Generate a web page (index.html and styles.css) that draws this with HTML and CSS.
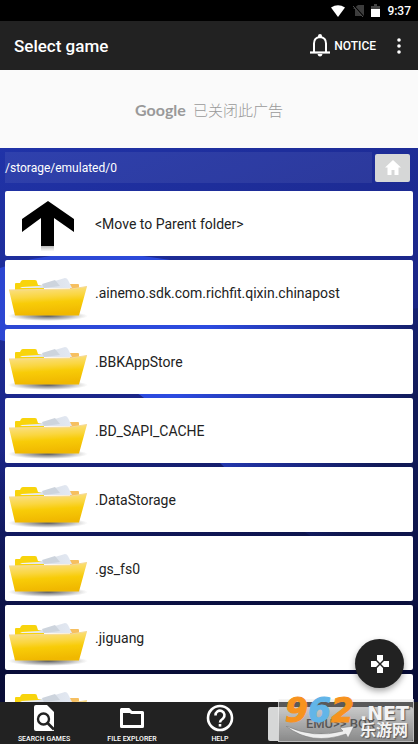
FILE: index.html
```html
<!DOCTYPE html>
<html lang="en">
<head>
<meta charset="utf-8">
<meta name="viewport" content="width=device-width, initial-scale=1">
<title>Select game</title>
<link rel="stylesheet" href="styles.css">
</head>
<body>
<svg class="defs" aria-hidden="true">
  <defs>
    <linearGradient id="front" x1="0" y1="0" x2="0.15" y2="1">
      <stop offset="0" stop-color="#fae29a"/><stop offset="0.4" stop-color="#fad640"/><stop offset="0.6" stop-color="#f8cc08"/><stop offset="1" stop-color="#f0b800"/>
    </linearGradient>
    <linearGradient id="paper" x1="0" y1="0" x2="1" y2="0">
      <stop offset="0" stop-color="#f3f5f9"/><stop offset="0.5" stop-color="#dbe0e8"/><stop offset="1" stop-color="#e3e9f3"/>
    </linearGradient>
    <radialGradient id="shade">
      <stop offset="0" stop-color="#444" stop-opacity="0.9"/><stop offset="0.6" stop-color="#777" stop-opacity="0.5"/><stop offset="1" stop-color="#999" stop-opacity="0"/>
    </radialGradient>
    <linearGradient id="fade" x1="0" y1="0" x2="0" y2="1">
      <stop offset="0" stop-color="#bbb"/><stop offset="0.6" stop-color="#fff"/>
    </linearGradient>
    <symbol id="folder" viewBox="0 0 80 46">
      <ellipse cx="40" cy="40" rx="40" ry="5" fill="url(#shade)"/>
      <path d="M7 15V8q0-1 1-1h4l1-2q1-1 2-1h12q2 0 2 2l1 3h6v6z" fill="#f8d40c"/>
      <path d="M62 8h8q1 0 1 1v4h-9z" fill="#f6bf60"/>
      <path d="M14 11l16-1 27-8q2 0 3 2l4 8H12z" fill="url(#paper)"/>
      <path d="M34 8l13-4 5 6-16 2z" fill="#cdd4dd"/>
      <path d="M1 14l62-1 16-2.500-8 29H7z" fill="url(#front)"/>
      <path d="M1 14l62-1 16-2.500" fill="none" stroke="#f5d996"/>
    </symbol>
  </defs>
</svg>
<div class="status">
  <svg width="16" height="12" viewBox="0 0 16 12"><path d="M1 2.500Q8-2 15 2.500L8 12z" fill="#fff"/></svg>
  <svg width="11" height="13" viewBox="0 0 11 13"><path d="M0 5l5-4h6v11H2V5z" fill="#3c3c3c"/><path d="M0 1l11 12" stroke="#000" stroke-width="1.500"/><path d="M0 2l10 11" stroke="#555"/></svg>
  <svg width="9" height="13" viewBox="0 0 9 13"><path d="M0 2h3V0h3v2h3v11H0z" fill="#444"/><path d="M0 5h9v8H0z" fill="#fff"/></svg>
  <span class="clock">9:37</span>
</div>
<header class="appbar">
  <h1>Select game</h1>
  <button class="notice" type="button">
    <svg width="20" height="23" viewBox="0 0 20 23"><path d="M4 18V9.500q0-6 6-6.500q6 .5 6 6.500V18" fill="none" stroke="#fff" stroke-width="2"/><path d="M8 3.500V2a2 2 0 0 1 4 0v1.500z" fill="#fff"/><path d="M0 18.500h20" stroke="#fff" stroke-width="2.200"/><path d="M7.500 20h5q-.5 2.500-2.500 2.500T7.500 20z" fill="#fff"/></svg>
    <span>NOTICE</span>
  </button>
  <button class="more" type="button" aria-label="More options">
    <svg width="4" height="16" viewBox="0 0 4 16" fill="#fff"><circle cx="2" cy="2" r="1.800"/><circle cx="2" cy="8" r="1.800"/><circle cx="2" cy="14" r="1.800"/></svg>
  </button>
</header>
<aside class="ad"><span class="brand">Google</span><span lang="zh-CN">已关闭此广告</span></aside>
<main class="browser">
  <svg class="wallpaper" viewBox="0 0 418 554" preserveAspectRatio="none" aria-hidden="true">
    <defs>
      <linearGradient id="base" x1="0" y1="0" x2="0.3" y2="1"><stop offset="0" stop-color="#2033a8"/><stop offset="0.5" stop-color="#1b2688"/><stop offset="1" stop-color="#0b1245"/></linearGradient>
      <linearGradient id="glow" x1="0" y1="0" x2="1" y2="0.4"><stop offset="0" stop-color="#2c46d0"/><stop offset="0.5" stop-color="#2c4be0"/><stop offset="0.8" stop-color="#1d2b90"/><stop offset="1" stop-color="#111a58"/></linearGradient>
      <linearGradient id="night" x1="0" y1="0" x2="0" y2="1"><stop offset="0" stop-color="#080c35" stop-opacity="0"/><stop offset="1" stop-color="#080c35"/></linearGradient>
    </defs>
    <path d="M0 0h418v554H0z" fill="url(#base)"/>
    <path d="M0 120Q70 95 170 112Q300 180 418 160V460Q340 410 305 384Q250 345 220 315Q180 275 140 247Q80 210 0 192z" fill="url(#glow)"/>
    <path d="M0 300h418v254H0z" fill="url(#night)"/>
  </svg>
  <div class="path">
    <output class="location">/storage/emulated/0</output>
    <button class="home" type="button" aria-label="Home"><svg width="16" height="15" viewBox="0 0 16 15"><path d="M8 0l8 7.500h-2.500V15H9.500v-5h-3v5h-4V7.500H0z" fill="#fff"/></svg></button>
  </div>
  <ul class="list">
    <li><a href="#"><svg class="up" width="54" height="54" viewBox="0 0 54 54"><path d="M20 45h13v9H20z" fill="url(#fade)"/><path d="M27 0L53 18v13L33 17v28H20V17L1 31V18z"/></svg><span>&lt;Move to Parent folder&gt;</span></a></li>
    <li><a href="#"><svg class="folder"><use href="#folder"/></svg><span>.ainemo.sdk.com.richfit.qixin.chinapost</span></a></li>
    <li><a href="#"><svg class="folder"><use href="#folder"/></svg><span>.BBKAppStore</span></a></li>
    <li><a href="#"><svg class="folder"><use href="#folder"/></svg><span>.BD_SAPI_CACHE</span></a></li>
    <li><a href="#"><svg class="folder"><use href="#folder"/></svg><span>.DataStorage</span></a></li>
    <li><a href="#"><svg class="folder"><use href="#folder"/></svg><span>.gs_fs0</span></a></li>
    <li><a href="#"><svg class="folder"><use href="#folder"/></svg><span>.jiguang</span></a></li>
    <li><a href="#" aria-label="Folder"><svg class="folder"><use href="#folder"/></svg></a></li>
  </ul>
</main>
<button class="fab" type="button" aria-label="Gamepad"><svg width="18" height="18" viewBox="0 0 18 18" fill="#fff"><path d="M6 0h6v5L9 8 6 5zM6 18h6v-5l-3-3-3 3zM0 6h5l3 3-3 3H0zM18 6h-5l-3 3 3 3h5z"/></svg></button>
<nav class="tabs">
  <button type="button"><svg width="22" height="28" viewBox="0 0 22 28"><path d="M3 1h11l7 7v19H3q-2 0-2-2V3q0-2 2-2z" fill="#fff"/><circle cx="10.500" cy="15" r="5.500" fill="none" stroke="#222" stroke-width="2.400"/><path d="M14.500 19l6.500 6.500" stroke="#222" stroke-width="2.600"/></svg><span>SEARCH GAMES</span></button>
  <button type="button"><svg width="26" height="28" viewBox="0 0 26 28"><path d="M2.500 5.500h7l3 3h11v14h-21z" fill="none" stroke="#fff" stroke-width="3" stroke-linejoin="round"/><path d="M2 4h8l4 5H2z" fill="#fff"/></svg><span>FILE EXPLORER</span></button>
  <button type="button"><svg width="28" height="28" viewBox="0 0 28 28" fill="none" stroke="#fff" stroke-width="2.600"><circle cx="14" cy="14" r="12"/><path d="M9.500 11.500a4.500 4.500 0 1 1 7.500 3q-3 2-3 4"/><path d="M14 20v2.600"/></svg><span>HELP</span></button>
  <button class="emu" type="button">EMU&gt;&gt; BOX</button>
</nav>
<div class="watermark">
  <span class="digits"><i>9</i><i class="blue">6</i><i>2</i></span>
  <svg class="swoosh" width="68" height="16" viewBox="0 0 68 16"><path d="M0 0Q28 13 57 5l-3-3 14-2-6 12-2-4Q25 20 0 0z" fill="#eee" stroke="#777" stroke-width=".5"/></svg>
  <span class="net">.NET</span>
  <span class="site" lang="zh-CN">乐游网</span>
</div>
</body>
</html>
```
FILE: styles.css
```css
* { box-sizing: border-box; }
body {
  margin: 0;
  height: 100vh;
  display: flex;
  flex-direction: column;
  position: relative;
  overflow: hidden;
  background: #222;
  font-family: Roboto, "Noto Sans CJK SC", sans-serif;
  color: #222;
}
button {
  font: inherit;
  color: inherit;
  border: 0;
  padding: 0;
  background: none;
}
svg { display: block; flex: none; }
.defs { position: absolute; width: 0; height: 0; }

.status {
  flex: none;
  height: 21px;
  padding: 0 7px;
  display: flex;
  align-items: center;
  justify-content: flex-end;
  gap: 7px;
  background: #000;
  color: #fff;
}
.clock { font-size: 12px; font-weight: 500; }

.appbar {
  flex: none;
  height: 49px;
  padding: 0 17px 0 14px;
  display: flex;
  align-items: center;
  background: #222;
  color: #fff;
}
.appbar h1 {
  flex: 1;
  margin: 0;
  font-size: 17px;
  font-weight: 500;
}
.notice {
  display: flex;
  align-items: center;
  gap: 4px;
  font-size: 12px;
  font-weight: 500;
}
.more { margin-left: 21px; }

.ad {
  flex: none;
  height: 78px;
  display: flex;
  align-items: center;
  justify-content: center;
  gap: 7px;
  background: #fafafa;
  color: #999;
  font-size: 15px;
  font-weight: 300;
}
.brand {
  font-family: Lato, sans-serif;
  font-size: 16px;
  font-weight: 700;
}

.browser {
  flex: 1;
  min-height: 0;
  position: relative;
  overflow: hidden;
}
.wallpaper {
  position: absolute;
  inset: 0;
  width: 100%;
  height: 100%;
}
.path {
  position: relative;
  display: flex;
  align-items: center;
  gap: 3px;
  height: 39px;
  padding: 0 8px 0 5px;
}
.location {
  flex: 1;
  height: 31px;
  line-height: 32px;
  background: rgba(255, 255, 255, 0.07);
  color: #fff;
  font-size: 12px;
}
.home {
  display: flex;
  align-items: center;
  justify-content: center;
  width: 35px;
  height: 28px;
  border-radius: 2px;
  background: #d6d7d7;
}
.list {
  position: relative;
  margin: 0;
  padding: 4px 5px;
  list-style: none;
  display: grid;
  gap: 4px;
}
.list a {
  display: grid;
  grid-template-columns: 80px 1fr;
  column-gap: 7px;
  align-items: center;
  height: 65px;
  padding: 0 3px;
  border-radius: 2px;
  background: #fff;
  color: #222;
  font-size: 14px;
  line-height: 18px;
  text-decoration: none;
}
.folder { width: 80px; height: 46px; margin-top: 13px; }
.up { justify-self: center; margin-top: 8px; }

.fab {
  position: absolute;
  right: 14px;
  bottom: 56px;
  width: 49px;
  height: 49px;
  display: flex;
  align-items: center;
  justify-content: center;
  border-radius: 50%;
  background: #222;
  box-shadow: 0 3px 6px rgba(0, 0, 0, 0.35);
}

.tabs {
  flex: none;
  height: 42px;
  padding-right: 5px;
  display: grid;
  grid-template-columns: 88fr 88fr 88fr 149fr;
  background: #222;
  color: #fff;
}
.tabs button {
  display: flex;
  flex-direction: column;
  align-items: center;
  padding-top: 2px;
  font-size: 7px;
  line-height: 14px;
  font-weight: 500;
}
.tabs .emu {
  justify-content: center;
  margin: 5px 0 5px 4px;
  padding: 0;
  border-radius: 2px;
  background: #d6d7d7;
  color: #222;
  font-size: 13px;
}

.watermark {
  position: absolute;
  right: 4px;
  bottom: 2px;
  width: 136px;
  height: 43px;
  border: 1px solid rgba(255, 255, 255, 0.6);
  border-top: 0;
  background: linear-gradient(rgba(220, 220, 220, 0.3), rgba(105, 105, 105, 0.7));
  color: #f4f4f4;
  font-weight: 700;
  pointer-events: none;
}
.watermark > * { position: absolute; }
.digits {
  left: 6px;
  top: -6px;
  font: italic 700 33px/36px "DejaVu Sans", sans-serif;
  color: #f7931e;
  -webkit-text-stroke: 1px #f7931e;
  display: flex;
}
.digits i { width: 23px; }
.digits .blue { color: #62b5e8; -webkit-text-stroke-color: #62b5e8; }
.swoosh { left: 7px; top: 27px; }
.net {
  right: 4px;
  top: 3px;
  font: 700 19px/22px "DejaVu Sans", sans-serif;
  text-shadow: 1px 1px 1px #555;
}
.site {
  right: 5px;
  top: 22px;
  font-size: 16px;
  line-height: 20px;
  text-shadow: 1px 1px 1px #555;
}
```
